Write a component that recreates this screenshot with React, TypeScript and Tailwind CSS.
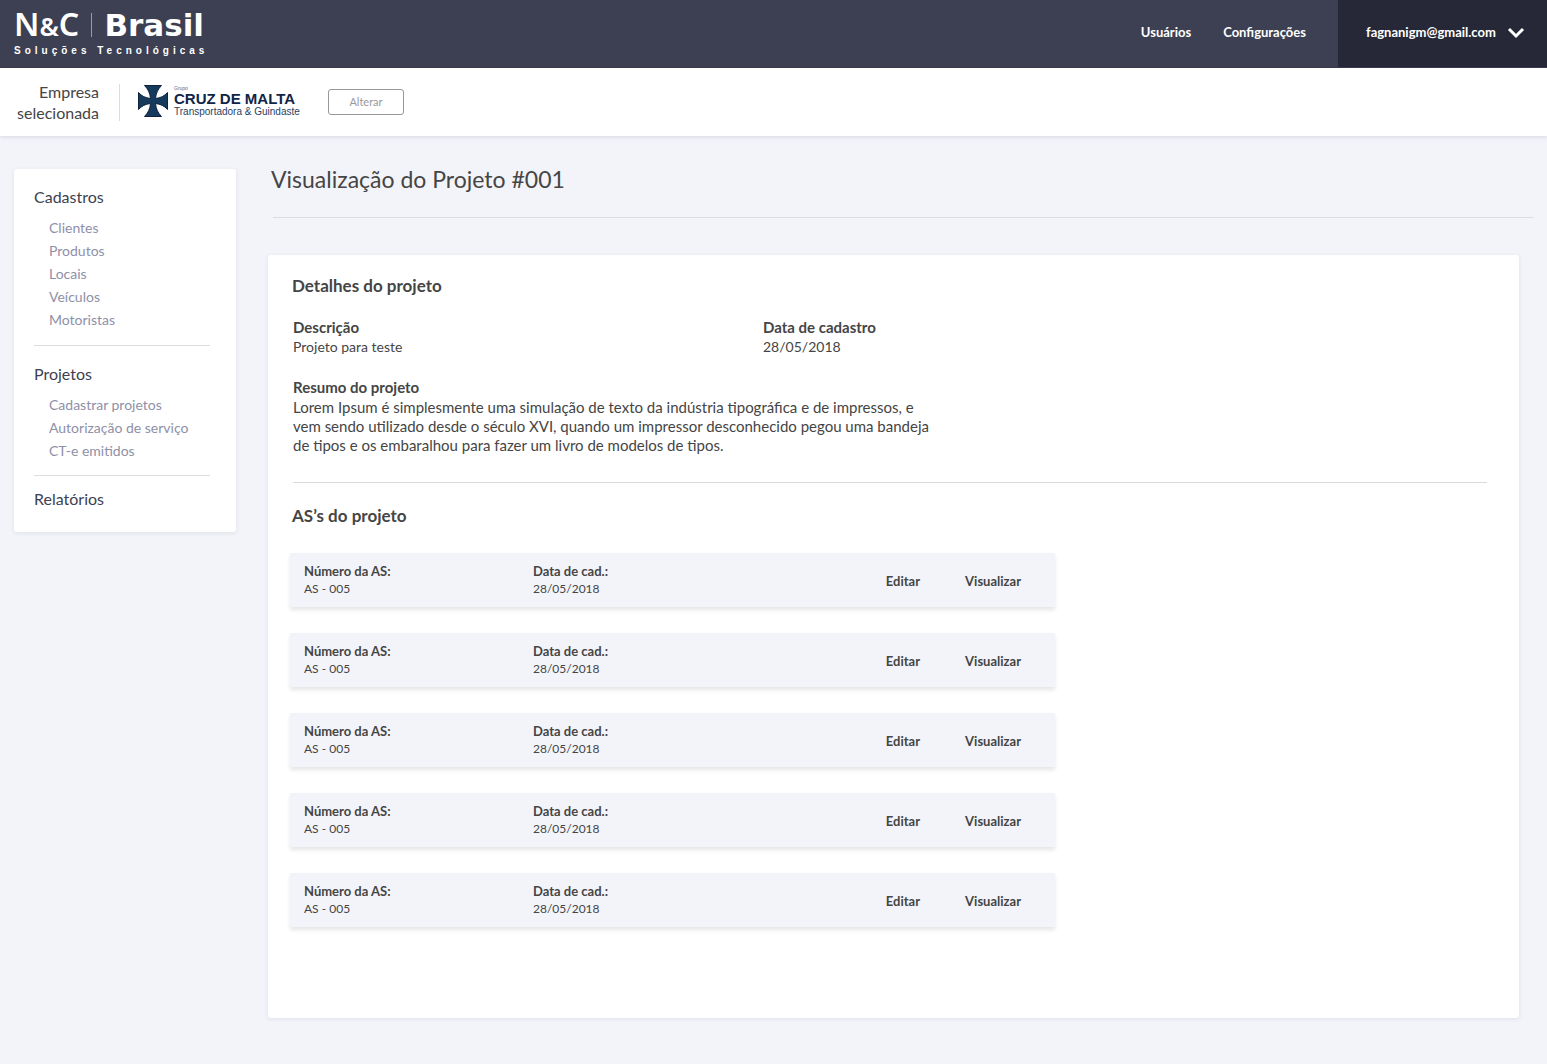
type LinkGroup = { title: string; items: string[]; spacing: string };

const groups: LinkGroup[] = [
  {
    title: "Cadastros",
    items: ["Clientes", "Produtos", "Locais", "Veículos", "Motoristas"],
    spacing: "",
  },
  {
    title: "Projetos",
    items: ["Cadastrar projetos", "Autorização de serviço", "CT-e emitidos"],
    spacing: "mt-[14px] border-t border-[#dedee2] pt-4",
  },
  { title: "Relatórios", items: [], spacing: "mt-[13px] border-t border-[#dedee2] pt-[11px]" },
];

const services = [1, 2, 3, 4, 5].map((id) => ({ id, number: "AS - 005", date: "28/05/2018" }));

function BrandLogo() {
  return (
    <a href="#" aria-label="N&C Brasil Soluções Tecnológicas" className="flex w-[190px] flex-col pt-2 text-white">
      <span className="flex items-center justify-between leading-8">
        <span className="font-['Noto_Sans',sans-serif] text-[32px] font-semibold">
          N<span className="text-[26px]">&amp;</span>C
        </span>
        <span className="h-6 w-px bg-[#9a9ba8]" />
        <span className="font-['DejaVu_Sans',sans-serif] text-[31px] font-bold">Brasil</span>
      </span>
      <span className="pt-px font-['Liberation_Sans',sans-serif] text-[10px] leading-4 font-bold tracking-[4px] whitespace-nowrap">
        Soluções Tecnológicas
      </span>
    </a>
  );
}

function CompanyLogo() {
  return (
    <div className="flex w-[158px] items-center gap-[6px] pb-[2px] font-['Liberation_Sans',sans-serif] text-[#0f2547]">
      <svg width="30" height="32" viewBox="0 0 30 32" className="shrink-0" aria-hidden="true">
        <path
          d="M6.500 .5H23.500C20 4 18 8 17.500 13.500C22.500 13 26.500 11 29.500 7.500V24.500C26.500 21 22.500 19 17.500 18.500C18 24 20 28 23.500 31.500H6.500C10 28 12 24 12.500 18.500C7.500 19 3.500 21 .5 24.500V7.500C3.500 11 7.500 13 12.500 13.500C12 8 10 4 6.500 .5Z"
          fill="#163a5c"
          stroke="#0d2340"
          strokeWidth="1"
        />
      </svg>
      <div className="flex flex-col whitespace-nowrap">
        <span className="text-[5px] leading-[6px] text-[#52708c]">Grupo</span>
        <span className="text-[15px] leading-[15px] font-bold">CRUZ DE MALTA</span>
        <span className="text-[10px] leading-[11px] text-[#274264]">Transportadora &amp; Guindaste</span>
      </div>
    </div>
  );
}

function Field({ label, value, valueClass = "" }: { label: string; value: string; valueClass?: string }) {
  return (
    <div>
      <dt className="font-bold">{label}</dt>
      <dd className={valueClass}>{value}</dd>
    </div>
  );
}

export default function App() {
  return (
    <div className="min-h-screen bg-[#f3f4f9] pb-[46px] font-['Lato',sans-serif] text-[#454545]">
      <header className="flex h-[68px] justify-between border-b border-[#3a3b4c] bg-[#3d3f52] pl-[14px] text-[13px] text-white">
        <BrandLogo />
        <div className="flex font-bold">
          <nav className="flex items-center gap-8 pr-8 pb-px">
            <a href="#">Usuários</a>
            <a href="#">Configurações</a>
          </nav>
          <button type="button" className="flex w-[209px] items-center justify-between bg-[#262837] pr-[22px] pb-px pl-7">
            fagnanigm@gmail.com
            <svg width="18" height="12" viewBox="0 0 18 12" fill="none" aria-hidden="true">
              <path d="M2 2L9 9L16 2" stroke="currentColor" strokeWidth="3" />
            </svg>
          </button>
        </div>
      </header>

      <section className="flex h-[68px] items-center bg-white pl-[14px] shadow-[0_1px_4px_rgba(60,60,90,0.15)]">
        <p className="w-[85px] text-right text-base leading-[21px]">
          Empresa
          <br />
          selecionada
        </p>
        <div className="mr-[18px] ml-5 h-[37px] w-px bg-[#dcdcdf]" />
        <CompanyLogo />
        <button type="button" className="ml-8 h-[26px] w-[76px] rounded-[3px] border border-[#98989c] text-[11px] text-[#98989c]">
          Alterar
        </button>
      </section>

      <div className="flex items-start gap-8 pt-[33px] pl-[14px]">
        <nav className="w-[222px] shrink-0 rounded-[3px] bg-white pt-4 pr-[26px] pb-[21px] pl-5 shadow-[0_1px_4px_rgba(60,60,90,0.1)]">
          {groups.map((group) => (
            <div key={group.title} className={group.spacing}>
              <h2 className="text-base leading-6 text-[#3d3f52]">{group.title}</h2>
              {group.items.length > 0 && (
                <ul className="mt-[7px] pl-[15px] text-sm leading-[23px] text-[#8e90a8]">
                  {group.items.map((item) => (
                    <li key={item}>
                      <a href="#">{item}</a>
                    </li>
                  ))}
                </ul>
              )}
            </div>
          ))}
        </nav>

        <main className="min-w-0 flex-1">
          <div className="-mt-[2px] mr-[13px] ml-[5px] border-b border-[#dcdde1] pb-[26px]">
            <h1 className="-ml-[2px] text-[23px] leading-6">Visualização do Projeto #001</h1>
          </div>

          <div className="mt-[37px] mr-7 rounded-[3px] bg-white pt-[19px] pr-8 pb-[91px] pl-6 shadow-[0_1px_4px_rgba(60,60,90,0.1)]">
            <h2 className="text-[17px] leading-6 font-bold">Detalhes do projeto</h2>
            <dl className="mt-[19px] ml-px grid grid-cols-[470px_1fr] gap-y-5 border-b border-[#dadade] pb-[27px] text-[15px] leading-5">
              <Field label="Descrição" value="Projeto para teste" valueClass="text-sm leading-5" />
              <Field label="Data de cadastro" value="28/05/2018" valueClass="text-sm leading-5" />
              <div className="col-span-2">
                <dt className="font-bold">Resumo do projeto</dt>
                <dd className="pt-px leading-[19px]">
                  Lorem Ipsum é simplesmente uma simulação de texto da indústria tipográfica e de impressos, e
                  <br />
                  vem sendo utilizado desde o século XVI, quando um impressor desconhecido pegou uma bandeja
                  <br />
                  de tipos e os embaralhou para fazer um livro de modelos de tipos.
                </dd>
              </div>
            </dl>

            <h2 className="mt-[21px] text-[17px] leading-6 font-bold">AS’s do projeto</h2>
            <ul className="mt-[25px] -ml-[2px] flex max-w-[765px] flex-col gap-[26px] text-[13px] leading-[17px]">
              {services.map((service) => (
                <li
                  key={service.id}
                  className="flex items-center bg-[#f3f4f9] py-[10px] pr-[34px] pl-[14px] shadow-[0_3px_4px_rgba(0,0,0,0.1)]"
                >
                  <dl className="grid flex-1 grid-cols-[229px_1fr]">
                    <Field label="Número da AS:" value={service.number} valueClass="text-xs leading-[17px]" />
                    <Field label="Data de cad.:" value={service.date} valueClass="text-xs leading-[17px]" />
                  </dl>
                  <div className="flex gap-[45px] pt-[3px] font-bold">
                    <a href="#">Editar</a>
                    <a href="#">Visualizar</a>
                  </div>
                </li>
              ))}
            </ul>
          </div>
        </main>
      </div>
    </div>
  );
}
